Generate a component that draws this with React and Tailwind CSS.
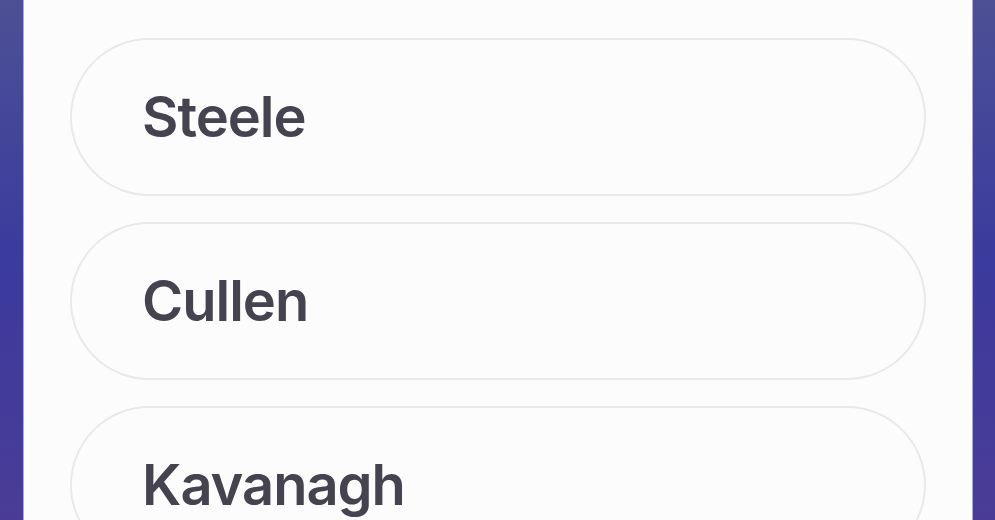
import React from 'react';

const names = ['Steele', 'Cullen', 'Kavanagh'];

export default function App() {
  return (
    <div className="h-[520px] w-[995px] overflow-hidden bg-gradient-to-b from-[#4d5094] via-[#3b3a9e] to-[#4a3c96] flex">
      <div className="ml-[24px] w-[948px] h-full bg-[#fdfcfd] px-[46px] pt-[38px] flex flex-col gap-[26px] shadow-[-1px_0_0_#a9a8e6,1px_0_0_#a9a8e6]">
        {names.map((name) => (
          <div
            key={name}
            className="shrink-0 h-[158px] rounded-full border-2 border-[#ebe8ed] flex items-center pl-[70px]"
          >
            <span
              className="text-[56px] font-semibold text-[#45434f] leading-none tracking-[-1px]"
              style={{ fontFamily: 'Inter, "Noto Sans", sans-serif' }}
            >
              {name}
            </span>
          </div>
        ))}
      </div>
    </div>
  );
}
